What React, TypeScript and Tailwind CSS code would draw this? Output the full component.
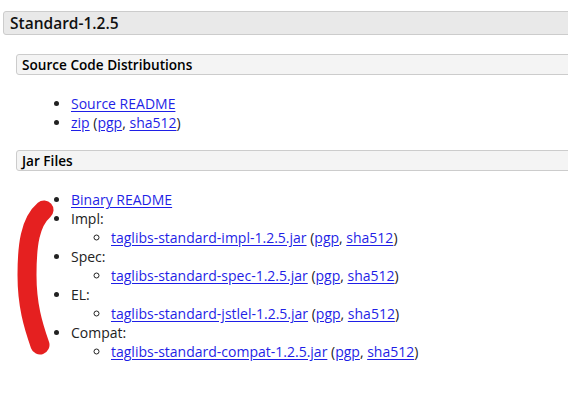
import React from 'react';

const A: React.FC<{ children: React.ReactNode }> = ({ children }) => (
  <a href="#" className="text-[#1f1fe6] underline underline-offset-2">{children}</a>
);

const Sig: React.FC = () => (
  <>
    {' '}(<A>pgp</A>, <A>sha512</A>)
  </>
);

const jars = [
  { label: 'Impl:', file: 'taglibs-standard-impl-1.2.5.jar' },
  { label: 'Spec:', file: 'taglibs-standard-spec-1.2.5.jar' },
  { label: 'EL:', file: 'taglibs-standard-jstlel-1.2.5.jar' },
  { label: 'Compat:', file: 'taglibs-standard-compat-1.2.5.jar' },
];

export default function App() {
  return (
    <div className="relative h-[400px] overflow-hidden bg-white font-['Open_Sans',sans-serif] text-[14px] leading-[19px] text-[#222]">
      <div className="pt-[11px] pl-[3px]">
        <h2 className="h-[24px] w-[620px] rounded-[3px] border border-[#cccccc] bg-[#e9e9e9] pl-[6px] text-[15.5px] font-semibold leading-[22px] text-[#111]">
          Standard-1.2.5
        </h2>
        <div className="ml-[13px] mt-[19px]">
          <h3 className="h-[21px] w-[620px] rounded-[3px] border border-[#cccccc] bg-[#f4f4f4] pl-[5px] text-[13.6px] font-semibold leading-[19px] text-black">
            Source Code Distributions
          </h3>
          <ul className="mt-[19px] list-disc pl-[55px]">
            <li><A>Source README</A></li>
            <li><A>zip</A><Sig /></li>
          </ul>
          <h3 className="mt-[18px] h-[21px] w-[620px] rounded-[3px] border border-[#cccccc] bg-[#f4f4f4] pl-[5px] text-[13.6px] font-semibold leading-[19px] text-black">
            Jar Files
          </h3>
          <ul className="mt-[19px] list-disc pl-[55px]">
            <li><A>Binary README</A></li>
            {jars.map((j) => (
              <li key={j.file}>
                {j.label}
                <ul className="list-[circle] pl-[40px]">
                  <li><A>{j.file}</A><Sig /></li>
                </ul>
              </li>
            ))}
          </ul>
        </div>
      </div>
      {/* red marker scribble */}
      <svg className="absolute left-0 top-0" width="80" height="400" viewBox="0 0 80 400">
        <path
          d="M44 210 C30 222, 27 245, 27 275 C27 305, 33 325, 40 345"
          fill="none"
          stroke="#e52020"
          strokeWidth="19"
          strokeLinecap="round"
        />
      </svg>
    </div>
  );
}
